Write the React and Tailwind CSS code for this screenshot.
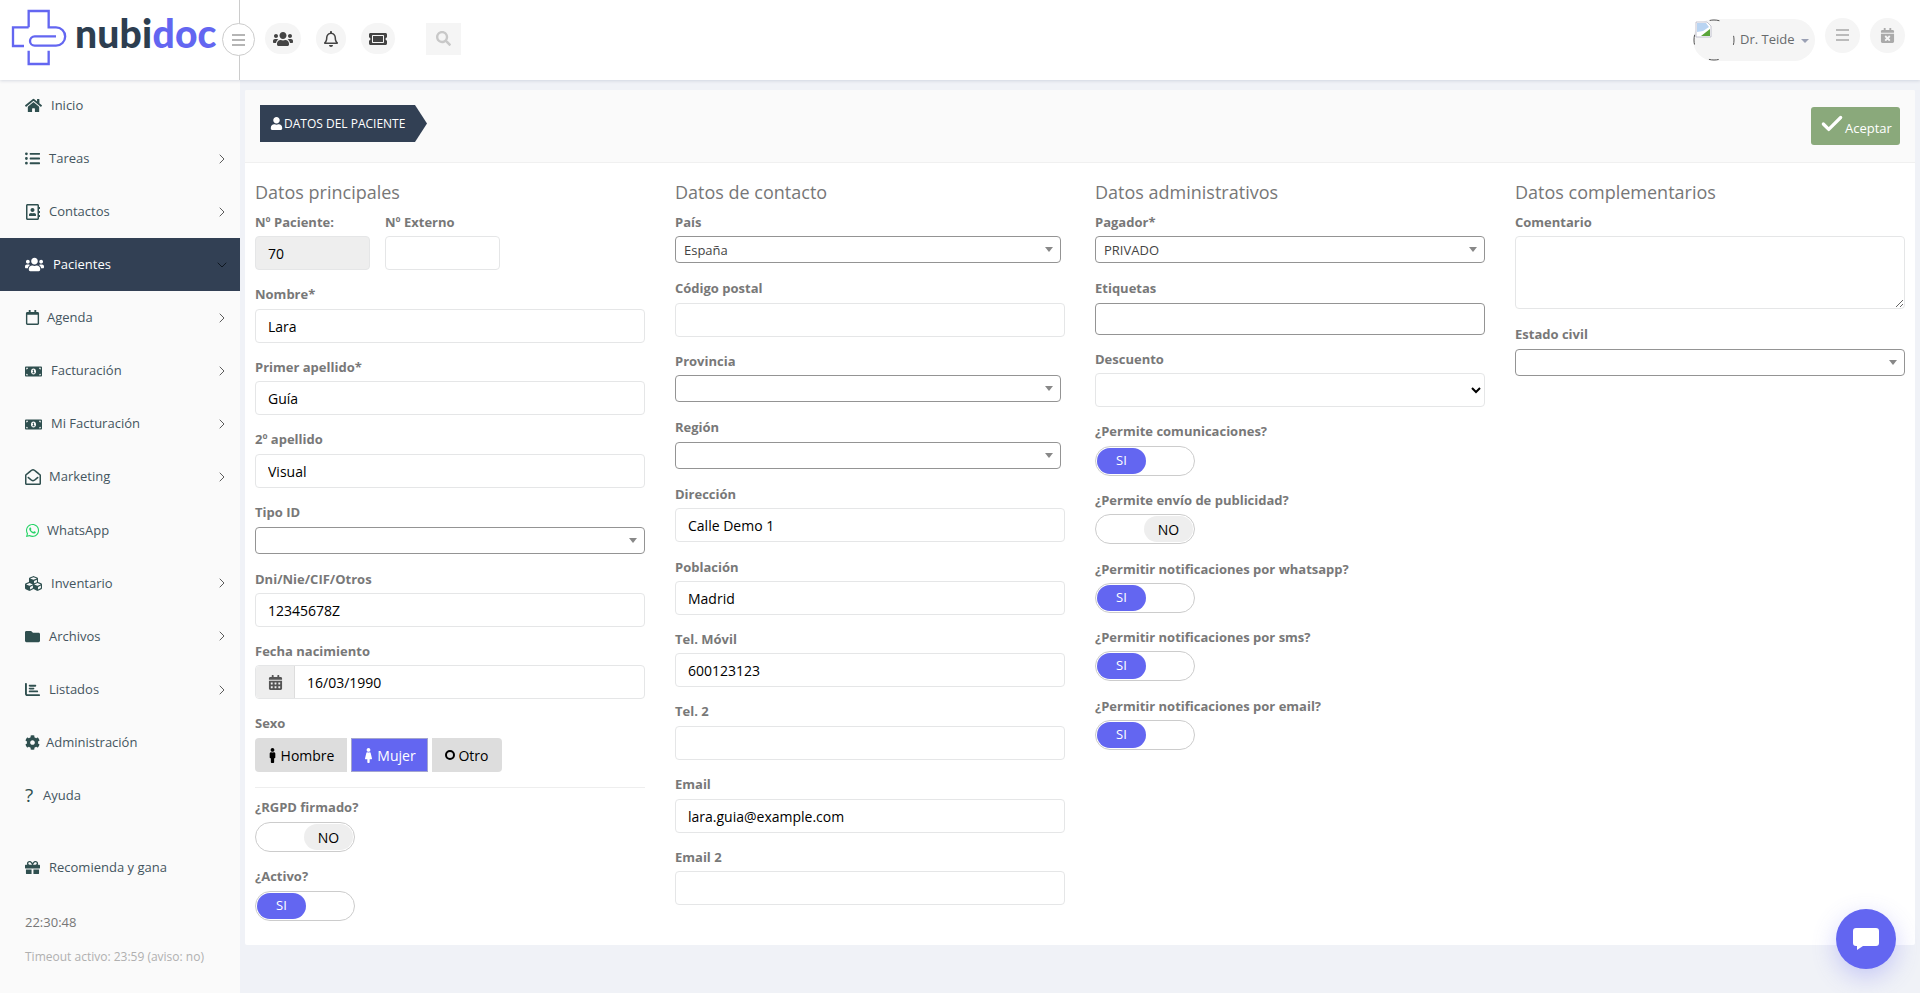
import React from "react";
import {
  FaHome, FaListUl, FaRegAddressBook, FaUsers, FaRegCalendar, FaMoneyBillAlt, FaRegEnvelopeOpen,
  FaWhatsapp, FaCubes, FaFolder, FaCog, FaGift, FaRegBell, FaTicketAlt, FaSearch,
  FaCalendarTimes, FaUser, FaCalendarAlt, FaMale, FaFemale,
} from "react-icons/fa";
import { FaChartBar } from "react-icons/fa6";
import { Check, ChevronDown, ChevronRight } from "lucide-react";

const font = "font-['Open_Sans',sans-serif]";

const menu = [
  { label: "Inicio", icon: FaHome, box: "w-[26px]", size: "text-[17px]" },
  { label: "Tareas", icon: FaListUl, box: "w-[24px]", size: "text-[15px]", arrow: true },
  { label: "Contactos", icon: FaRegAddressBook, box: "w-[24px]", size: "text-[16px]", arrow: true },
  { label: "Pacientes", icon: FaUsers, box: "w-[28px]", size: "text-[19px]", active: true },
  { label: "Agenda", icon: FaRegCalendar, box: "w-[22px]", size: "text-[15px]", arrow: true },
  { label: "Facturación", icon: FaMoneyBillAlt, box: "w-[26px]", size: "text-[17px]", arrow: true },
  { label: "Mi Facturación", icon: FaMoneyBillAlt, box: "w-[26px]", size: "text-[17px]", arrow: true },
  { label: "Marketing", icon: FaRegEnvelopeOpen, box: "w-[24px]", size: "text-[16px]", arrow: true },
  { label: "WhatsApp", icon: FaWhatsapp, box: "w-[22px]", size: "text-[15px]", green: true },
  { label: "Inventario", icon: FaCubes, box: "w-[26px]", size: "text-[17px]", arrow: true },
  { label: "Archivos", icon: FaFolder, box: "w-[24px]", size: "text-[15px]", arrow: true },
  { label: "Listados", icon: FaChartBar, box: "w-[24px]", size: "text-[15px]", arrow: true },
  { label: "Administración", icon: FaCog, box: "w-[21px]", size: "text-[15px]" },
  { label: "Ayuda", box: "w-[18px]", glyph: "?" },
];

function Logo() {
  return (
    <svg viewBox="0 0 210 180" className="w-[70px] h-[60px] shrink-0" fill="none" stroke="#6366f1" strokeWidth="7">
      <path d="M74 58 H27 V114 H60" />
      <path d="M74 58 V9 H134 V58 H156 A27.5 27.5 0 0 1 156 113 H92 A14 14 0 0 1 92 85 H156" />
      <path d="M74 128 V168 H134 V128" />
    </svg>
  );
}

function RoundIcon({ size, children }) {
  return <div className={`${size} flex items-center justify-center rounded-full bg-[#f5f5f5]`}>{children}</div>;
}

function BrokenAvatar() {
  return (
    <svg viewBox="0 0 42 42" className="w-[42px] h-[42px] shrink-0" fill="none">
      <circle cx="21" cy="21" r="20" stroke="#555" strokeWidth="1" strokeDasharray="10 21.4" strokeDashoffset="5" />
      <path d="M3 3 H14 L18 7 V18 H3 Z" fill="#fff" stroke="#aab" strokeWidth="0.7" />
      <path d="M4 4 H13 L16 8 L10 12 L4 13 Z" fill="#b9d4f2" />
      <path d="M8 17 L17 10 V17 Z" fill="#5aa53a" />
    </svg>
  );
}

function Header() {
  return (
    <header className="relative z-10 h-[80px] shrink-0 flex items-center bg-white shadow-[0_1px_3px_rgba(120,130,160,0.25)]">
      <div className="relative w-[240px] h-full shrink-0 border-r border-[#ccc]">
        <div className="flex items-start pl-[4px] pt-[8px]">
          <Logo />
          <span className="ml-[1px] mt-[1px] font-['Lato',sans-serif] font-black text-[39px] leading-[48px] tracking-[0.2px] text-[#2d3e50]">
            nubi<span className="text-[#6366f1]">doc</span>
          </span>
        </div>
        <div className="absolute left-[222px] top-[23px] w-[33px] h-[33px] rounded-full border border-[#ccc] bg-white flex flex-col items-center justify-center gap-[3px]">
          <i className="block w-[13px] h-[2px] bg-[#b5b5b5]" />
          <i className="block w-[13px] h-[2px] bg-[#b5b5b5]" />
          <i className="block w-[13px] h-[2px] bg-[#b5b5b5]" />
        </div>
      </div>
      <div className="flex items-center mt-[-3px] ml-[25px]">
        <RoundIcon size="w-[36px] h-[31px]"><FaUsers className="text-[20px] text-[#444]" /></RoundIcon>
        <div className="ml-[15px]"><RoundIcon size="w-[30px] h-[31px]"><FaRegBell className="text-[16px] text-[#444]" /></RoundIcon></div>
        <div className="ml-[15px]"><RoundIcon size="w-[34px] h-[31px]"><FaTicketAlt className="text-[18px] text-[#444]" /></RoundIcon></div>
        <div className="ml-[31px] w-[35px] h-[32px] bg-[#f5f5f5] flex items-center justify-center"><FaSearch className="text-[15px] text-[#c8c8c8]" /></div>
      </div>
      <div className="ml-auto mr-[15px] flex items-start mt-[-2px]">
        <div className="w-[122px] h-[42px] rounded-full bg-[#f5f5f5] flex items-center mt-[1px]">
          <BrokenAvatar />
          <span className={`${font} ml-[5px] text-[13px] text-[#676a6c]`}>Dr. Teide</span>
          <i className="ml-[6px] mt-[2px] w-0 h-0 border-x-[4px] border-x-transparent border-t-[4px] border-t-[#9aa0b4]" />
        </div>
        <div className="ml-[10px]">
          <RoundIcon size="w-[35px] h-[35px]">
            <div className="flex flex-col gap-[3px]">
              <i className="block w-[13px] h-[2px] bg-[#bbb]" />
              <i className="block w-[13px] h-[2px] bg-[#bbb]" />
              <i className="block w-[13px] h-[2px] bg-[#bbb]" />
            </div>
          </RoundIcon>
        </div>
        <div className="ml-[10px]"><RoundIcon size="w-[35px] h-[35px]"><FaCalendarTimes className="text-[15px] text-[#aaa]" /></RoundIcon></div>
      </div>
    </header>
  );
}

function Sidebar() {
  return (
    <aside className={`${font} w-[240px] shrink-0 bg-[#fafafa] text-[13px] text-[#44555f]`}>
      <nav className="-mt-[1px]">
        {menu.map((m) => {
          const Icon = m.icon;
          return (
            <div key={m.label} className={`h-[53.1px] flex items-center pl-[25px] pr-[10px] ${m.active ? "bg-[#324054] text-white" : ""}`}>
              <span className={`${m.box} shrink-0 flex items-center`}>
                {m.glyph ? (
                  <span className="text-[19px] leading-none text-[#2f4f4f]">{m.glyph}</span>
                ) : (
                  <Icon className={`${m.size} ${m.active ? "text-white" : m.green ? "text-[#25d366]" : "text-[#2f4f4f]"}`} />
                )}
              </span>
              <span>{m.label}</span>
              {m.arrow && <ChevronRight className="ml-auto w-[16px] h-[16px] text-[#333]" strokeWidth={1.2} />}
              {m.active && <ChevronDown className="ml-auto w-[16px] h-[16px] text-[#0d141c]" strokeWidth={1.4} />}
            </div>
          );
        })}
      </nav>
      <div className="mt-[19px] h-[53px] flex items-center pl-[25px]">
        <span className="w-[24px] shrink-0"><FaGift className="text-[15px] text-[#2f4f4f]" /></span>
        <span>Recomienda y gana</span>
      </div>
      <div className="mt-[18px] pl-[25px] h-[20px] leading-[20px] text-[#777]">22:30:48</div>
      <div className="mt-[15px] pl-[25px] h-[20px] leading-[20px] text-[12px] text-[#b0b0b0]">Timeout activo: 23:59 (aviso: no)</div>
    </aside>
  );
}

function Field({ label, gap = "mb-[15px]", tight, children }) {
  return (
    <div className={gap}>
      <label className={`block h-[20px] mb-[4px] text-[13px] font-bold text-[#787878] ${tight ? "leading-[19px]" : "leading-[20px]"}`}>{label}</label>
      {children}
    </div>
  );
}

function TextInput({ value = "", width = "w-full", disabled }) {
  return (
    <input
      readOnly
      defaultValue={value}
      className={`${width} block h-[34px] px-[12px] rounded-[4px] border border-[#e5e6e7] text-[14px] text-black outline-none ${disabled ? "bg-[#eee]" : "bg-white"}`}
    />
  );
}

function Combo({ value = "", width = "w-full" }) {
  return (
    <div className={`${width} h-[27px] flex items-center pl-[8px] pr-[7px] rounded-[4px] border border-[#949494] bg-white text-[13px] text-[#444]`}>
      <span className="mt-[2px]">{value}</span>
      <i className="ml-auto w-0 h-0 border-x-[4px] border-x-transparent border-t-[5px] border-t-[#888]" />
    </div>
  );
}

function Toggle({ on }) {
  return (
    <div className="w-[100px] h-[30px] p-px rounded-full border border-[#ccc] bg-white flex">
      {on ? (
        <div className="w-[49px] h-full rounded-full bg-[#6366f1] text-white text-[13px] flex items-center justify-center">SI</div>
      ) : (
        <div className="ml-auto w-[49px] h-full rounded-full bg-[#eee] text-black text-[14px] flex items-center justify-center">NO</div>
      )}
    </div>
  );
}

function SectionTitle({ children }) {
  return <h3 className="h-[24px] mb-[8px] leading-[24px] text-[18px] font-normal text-[#777]">{children}</h3>;
}

function SexButton({ active, extra, width, children }) {
  return (
    <div className={`${width} h-[34px] flex items-center justify-center gap-[1px] text-[14px] ${extra} ${active ? "bg-[#6366f1] text-white border border-[#a3a5cf]" : "bg-[#ddd] text-black"}`}>
      {children}
    </div>
  );
}

function MainColumn() {
  return (
    <div className="w-[390px]">
      <SectionTitle>Datos principales</SectionTitle>
      <div className="flex gap-[15px]">
        <Field label="Nº Paciente:"><TextInput value="70" width="w-[115px]" disabled /></Field>
        <Field label="Nº Externo"><TextInput width="w-[115px]" /></Field>
      </div>
      <Field label="Nombre*" gap="mb-[14px]" tight><TextInput value="Lara" /></Field>
      <Field label="Primer apellido*"><TextInput value="Guía" /></Field>
      <Field label="2º apellido" tight><TextInput value="Visual" /></Field>
      <Field label="Tipo ID" tight><Combo /></Field>
      <Field label="Dni/Nie/CIF/Otros" gap="mb-[14px]"><TextInput value="12345678Z" /></Field>
      <Field label="Fecha nacimiento">
        <div className="flex h-[34px] rounded-[4px] border border-[#e5e6e7] bg-white">
          <span className="w-[39px] shrink-0 flex items-center justify-center rounded-l-[4px] bg-[#eee] border-r border-[#ddd]">
            <FaCalendarAlt className="text-[15px] text-[#555]" />
          </span>
          <input readOnly defaultValue="16/03/1990" className="flex-1 min-w-0 px-[12px] text-[14px] text-black outline-none" />
        </div>
      </Field>
      <Field label="Sexo" gap="mb-0" tight>
        <div className="flex gap-[4px]">
          <SexButton width="w-[92px]" extra="rounded-l-[4px] pr-[3px]"><FaMale className="text-[15px]" />Hombre</SexButton>
          <SexButton width="w-[77px]" extra="pr-[2px]" active><FaFemale className="text-[15px]" />Mujer</SexButton>
          <SexButton width="w-[70px]" extra="rounded-r-[4px]">
            <i className="block w-[10px] h-[10px] rounded-full border-2 border-black mr-[2px]" />Otro
          </SexButton>
        </div>
      </Field>
      <hr className="mt-[15px] mb-[10px] border-[#eee]" />
      <Field label="¿RGPD firmado?" tight><Toggle /></Field>
      <div className="mb-[4px] h-[20px] leading-[19px] text-[13px] font-bold text-[#787878]">¿Activo?</div>
      <Toggle on />
    </div>
  );
}

function ContactColumn() {
  return (
    <div className="w-[390px]">
      <SectionTitle>Datos de contacto</SectionTitle>
      <Field label="País" gap="mb-[16px]"><Combo value="España" width="w-[386px]" /></Field>
      <Field label="Código postal" gap="mb-[14px]" tight><TextInput /></Field>
      <Field label="Provincia" gap="mb-[16px]"><Combo width="w-[386px]" /></Field>
      <Field label="Región" tight><Combo width="w-[386px]" /></Field>
      <Field label="Dirección"><TextInput value="Calle Demo 1" /></Field>
      <Field label="Población" gap="mb-[14px]"><TextInput value="Madrid" /></Field>
      <Field label="Tel. Móvil"><TextInput value="600123123" /></Field>
      <Field label="Tel. 2" tight><TextInput /></Field>
      <Field label="Email" gap="mb-[14px]" tight><TextInput value="lara.guia@example.com" /></Field>
      <Field label="Email 2"><TextInput /></Field>
    </div>
  );
}

function AdminColumn() {
  return (
    <div className="w-[390px]">
      <SectionTitle>Datos administrativos</SectionTitle>
      <Field label="Pagador*" gap="mb-[16px]"><Combo value="PRIVADO" /></Field>
      <Field label="Etiquetas" gap="mb-[14px]" tight>
        <input readOnly className="block w-full h-[32px] rounded-[4px] border border-[#949494] bg-white outline-none" />
      </Field>
      <Field label="Descuento">
        <select className="block w-full h-[34px] rounded-[4px] border border-[#e5e6e7] bg-white text-[13px] outline-none" />
      </Field>
      <Field label="¿Permite comunicaciones?" gap="mb-[14px]" tight><Toggle on /></Field>
      <Field label="¿Permite envío de publicidad?"><Toggle /></Field>
      <Field label="¿Permitir notificaciones por whatsapp?" gap="mb-[14px]"><Toggle on /></Field>
      <Field label="¿Permitir notificaciones por sms?"><Toggle on /></Field>
      <Field label="¿Permitir notificaciones por email?"><Toggle on /></Field>
    </div>
  );
}

function ExtraColumn() {
  return (
    <div className="w-[390px]">
      <SectionTitle>Datos complementarios</SectionTitle>
      <Field label="Comentario" gap="mb-[16px]">
        <textarea readOnly className="block w-full h-[73px] rounded-[4px] border border-[#e5e6e7] bg-white outline-none" />
      </Field>
      <Field label="Estado civil" tight><Combo /></Field>
    </div>
  );
}

function PatientCard() {
  return (
    <section className="h-[855px] rounded-[2px] bg-white overflow-hidden">
      <div className="h-[73px] flex items-start justify-between pl-[15px] pr-[15px] pt-[15px] bg-[#fafafa] border-b border-[#f0f0f0]">
        <div className="w-[167px] h-[37px] flex items-center pl-[10px] gap-[1px] bg-[#324054] text-white text-[12px] [clip-path:polygon(0_0,155px_0,100%_50%,155px_100%,0_100%)]">
          <FaUser className="text-[13px]" />
          DATOS DEL PACIENTE
        </div>
        <div className="w-[89px] h-[38px] mt-[2px] flex items-center pl-[8px] rounded-[3px] bg-[#8aa97b] text-white text-[13px]">
          <Check className="w-[26px] h-[26px] -mt-[5px]" strokeWidth={3} />
          <span className="mt-[6px]">Aceptar</span>
        </div>
      </div>
      <div className="flex gap-[30px] px-[10px] pt-[17px]">
        <MainColumn />
        <ContactColumn />
        <AdminColumn />
        <ExtraColumn />
      </div>
    </section>
  );
}

export default function App() {
  return (
    <div className={`${font} h-screen flex flex-col overflow-hidden bg-[#f0f2f7]`}>
      <Header />
      <div className="flex flex-1 min-h-0">
        <Sidebar />
        <main className="flex-1 pt-[10px] px-[5px]">
          <PatientCard />
        </main>
      </div>
      <button className="absolute left-[1836px] top-[909px] w-[60px] h-[60px] rounded-full bg-[#6366f1] flex items-center justify-center shadow-[0_8px_24px_rgba(99,102,241,0.3)]">
        <svg viewBox="0 0 26 22" className="w-[26px] h-[22px]" fill="#fff">
          <path d="M3 0H23a3 3 0 0 1 3 3V15a3 3 0 0 1-3 3H10L4 22V18H3a3 3 0 0 1-3-3V3a3 3 0 0 1 3-3Z" />
        </svg>
      </button>
    </div>
  );
}
